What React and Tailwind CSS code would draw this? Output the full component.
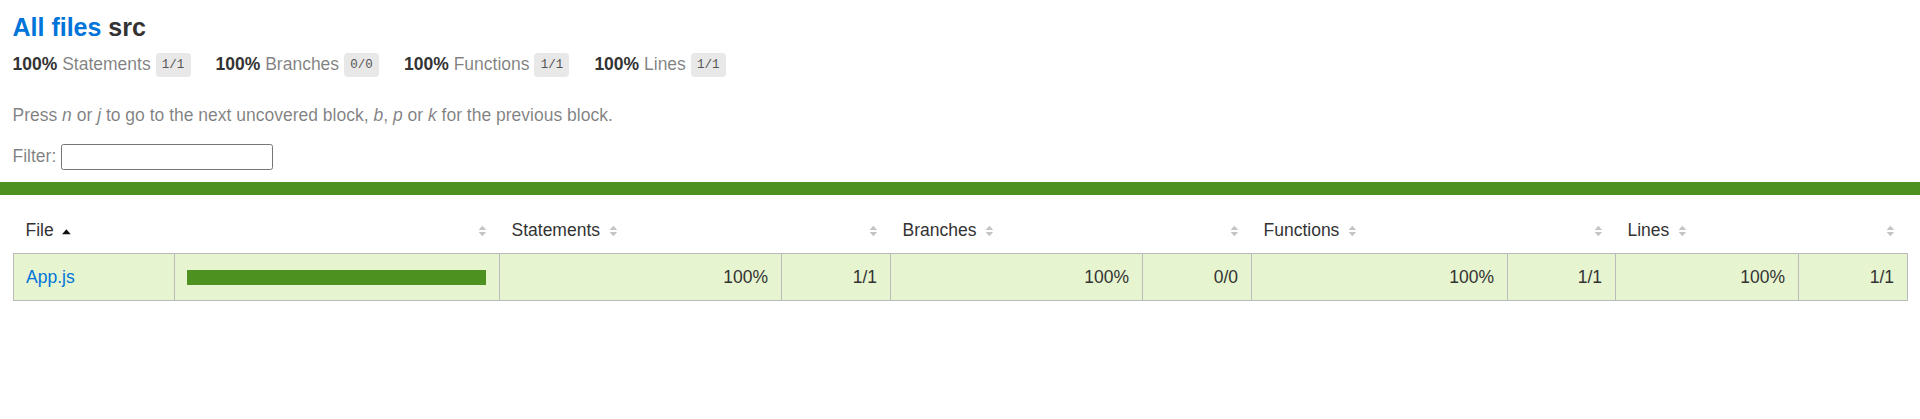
import React from 'react'

const stats = [
  { label: 'Statements', frac: '1/1' },
  { label: 'Branches', frac: '0/0' },
  { label: 'Functions', frac: '1/1' },
  { label: 'Lines', frac: '1/1' },
]

function Sorter({ sorted }) {
  return (
    <svg viewBox="0 0 7 10" className="inline-block w-[8.75px] h-[12.5px] ml-[8.75px]">
      {sorted ? (
        <polygon points="0,7.4 3.5,3.4 7,7.4" fill="#111" />
      ) : (
        <>
          <polygon points="0.5,4 3.5,0.6 6.5,4" fill="#c4c4c4" />
          <polygon points="0.5,5.6 3.5,9 6.5,5.6" fill="#c4c4c4" />
        </>
      )}
    </svg>
  )
}

export default function App() {
  return (
    <div className="min-h-screen bg-white text-[#333] text-[17.5px] leading-[normal] font-['Liberation_Sans',Arial,sans-serif]">
      {/* Header */}
      <div className="p-[12.5px]">
        <h1 className="text-[25px] font-bold leading-[normal]">
          <a href="#" className="text-[#0074D9]">All files</a> src
        </h1>
        <div className="flex">
          {stats.map((s) => (
            <div key={s.label} className="py-[12.5px] pr-[25px]">
              <span className="font-bold">100% </span>
              <span className="text-black/50">{s.label}</span>{' '}
              <span className="font-['Liberation_Mono',monospace] text-[12.5px] text-[#555] bg-[#E8E8E8] px-[6.25px] py-[5px] rounded-[3.75px] align-middle">
                {s.frac}
              </span>
            </div>
          ))}
        </div>
        <p className="my-[17.5px] text-black/50">
          Press <em>n</em> or <em>j</em> to go to the next uncovered block, <em>b</em>, <em>p</em> or <em>k</em> for the previous block.
        </p>
        <div className="text-black/50">
          Filter:{' '}
          <input
            type="search"
            className="w-[212px] h-[26px] border border-[#767676] rounded-[2.5px] bg-white px-[2.5px] align-middle"
          />
        </div>
      </div>

      {/* Status line */}
      <div className="h-[12.5px] bg-[rgb(77,146,33)]"></div>

      {/* Summary table */}
      <div className="p-[12.5px]">
        <table className="w-full table-fixed border-collapse">
          <thead>
            <tr className="border-b border-[#bbb]">
              <th className="w-[161px] p-[12.5px] text-left font-normal whitespace-nowrap">File<Sorter sorted /></th>
              <th className="w-[325px] p-[12.5px] text-right font-normal"><Sorter /></th>
              <th className="w-[282px] p-[12.5px] text-left font-normal whitespace-nowrap">Statements<Sorter /></th>
              <th className="w-[109px] p-[12.5px] text-right font-normal"><Sorter /></th>
              <th className="w-[252px] p-[12.5px] text-left font-normal whitespace-nowrap">Branches<Sorter /></th>
              <th className="w-[109px] p-[12.5px] text-right font-normal"><Sorter /></th>
              <th className="w-[256px] p-[12.5px] text-left font-normal whitespace-nowrap">Functions<Sorter /></th>
              <th className="w-[108px] p-[12.5px] text-right font-normal"><Sorter /></th>
              <th className="w-[183px] p-[12.5px] text-left font-normal whitespace-nowrap">Lines<Sorter /></th>
              <th className="p-[12.5px] text-right font-normal"><Sorter /></th>
            </tr>
          </thead>
          <tbody className="border border-[#bbb]">
            <tr className="border-b border-[#bbb] bg-[rgb(230,245,208)]">
              <td className="p-[12.5px] border-r border-[#bbb] whitespace-nowrap">
                <a href="#" className="text-[#0074D9]">App.js</a>
              </td>
              <td className="p-[12.5px] border-r border-[#bbb]">
                <div className="leading-[0]">
                  <div className="inline-block h-[15px] w-full bg-[rgb(77,146,33)]"></div>
                </div>
              </td>
              <td className="p-[12.5px] border-r border-[#bbb] text-right">100%</td>
              <td className="p-[12.5px] border-r border-[#bbb] text-right">1/1</td>
              <td className="p-[12.5px] border-r border-[#bbb] text-right">100%</td>
              <td className="p-[12.5px] border-r border-[#bbb] text-right">0/0</td>
              <td className="p-[12.5px] border-r border-[#bbb] text-right">100%</td>
              <td className="p-[12.5px] border-r border-[#bbb] text-right">1/1</td>
              <td className="p-[12.5px] border-r border-[#bbb] text-right">100%</td>
              <td className="p-[12.5px] text-right">1/1</td>
            </tr>
          </tbody>
        </table>
      </div>
    </div>
  )
}
